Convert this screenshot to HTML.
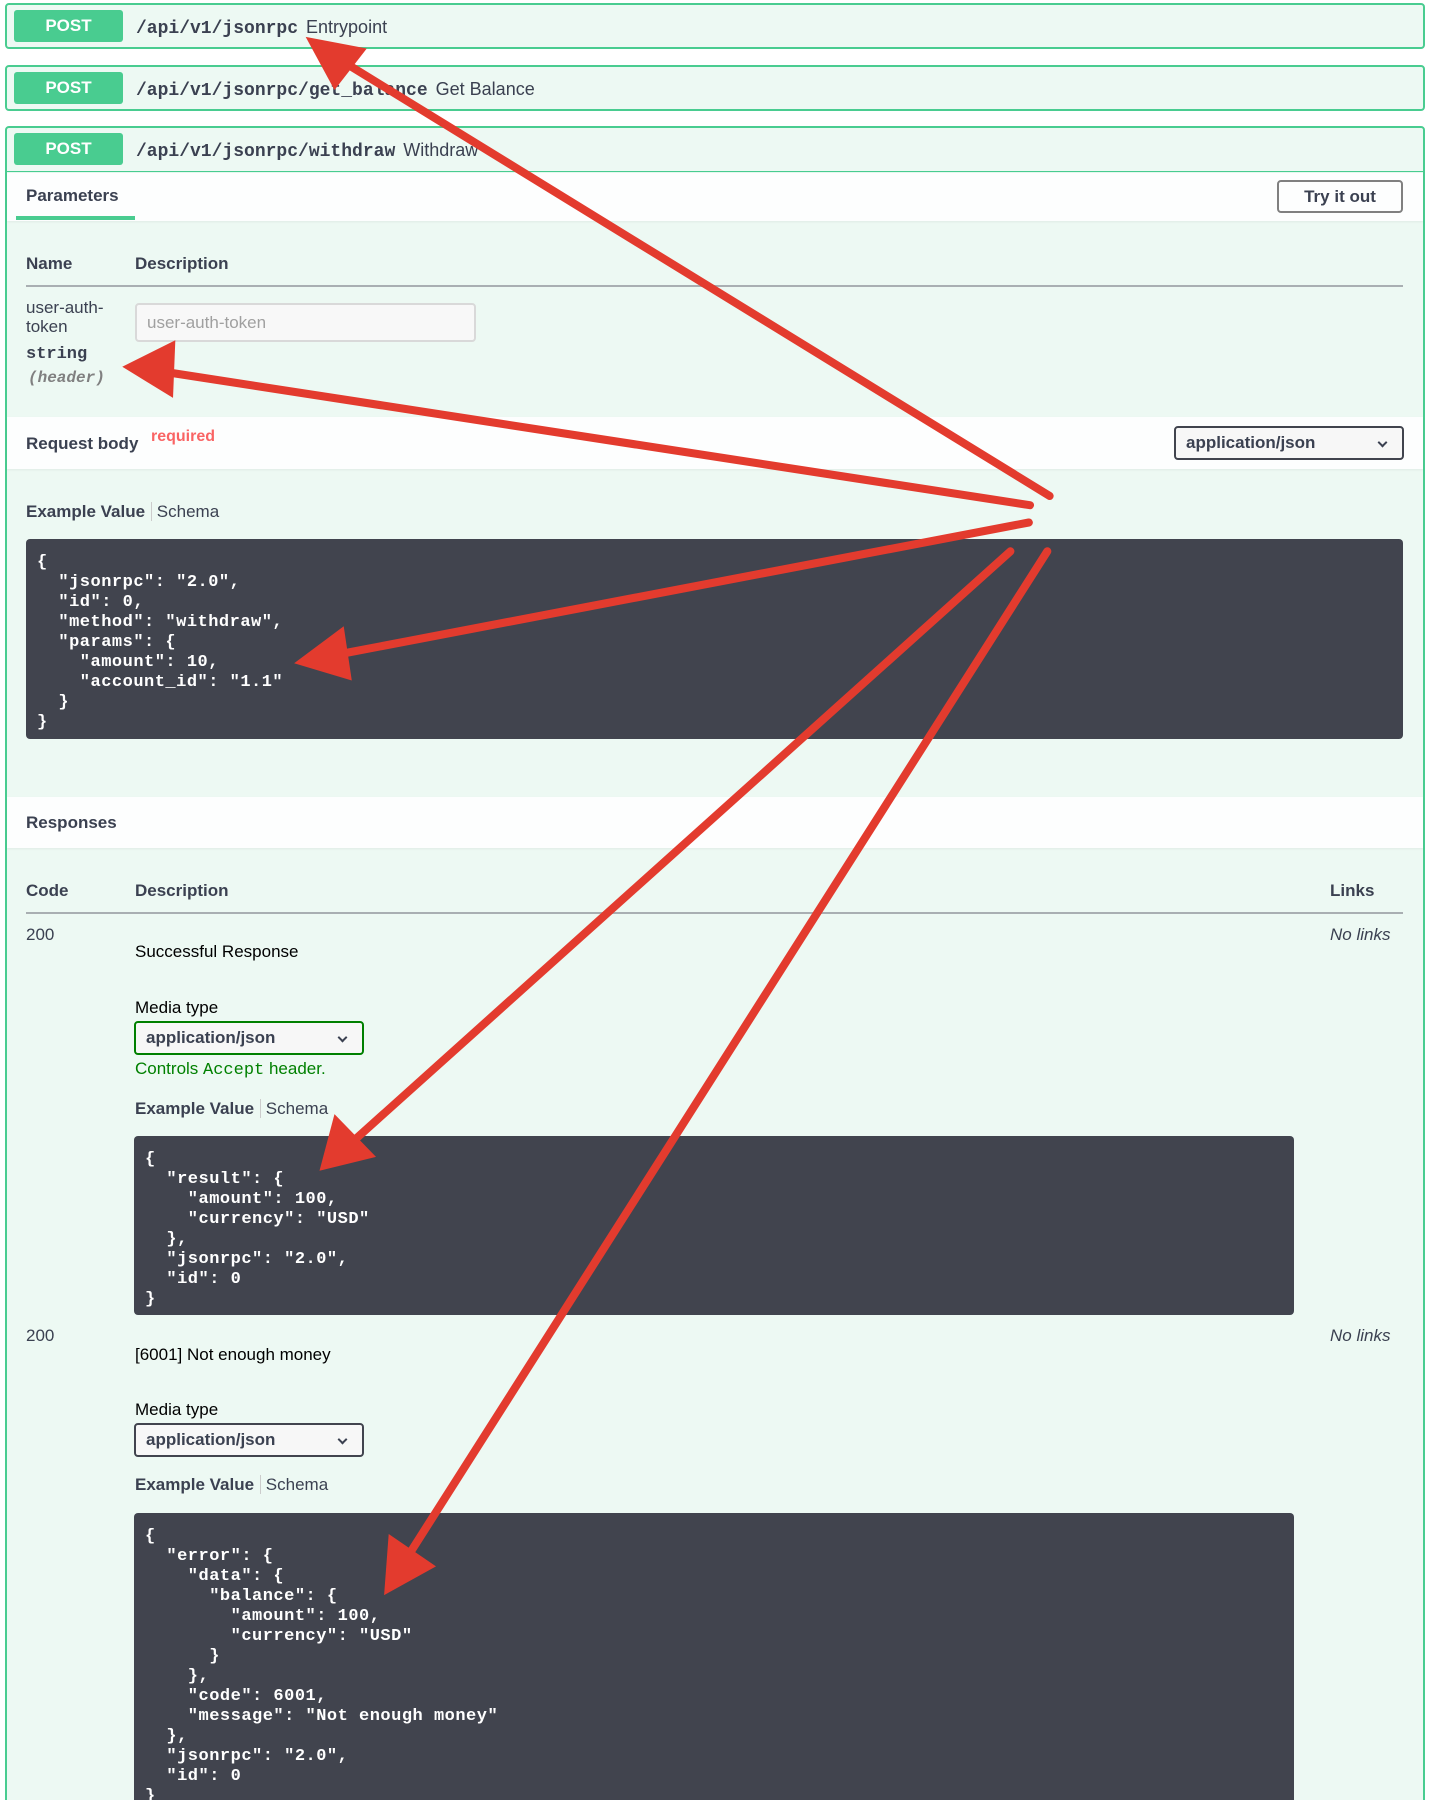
<!DOCTYPE html>
<html><head><meta charset="utf-8"><style>
*{box-sizing:border-box;margin:0;padding:0}
html,body{width:1436px;height:1800px;overflow:hidden;background:#fff}
body{font-family:"Liberation Sans",sans-serif;color:#3b4151;position:relative}
.a{position:absolute;white-space:nowrap}
.row{position:absolute;left:5px;width:1420px;border:2px solid #49cc90;border-radius:4px;background:#edf9f3}
.badge{position:absolute;left:7px;width:109px;height:32px;background:#49cc90;color:#fff;font-weight:bold;font-size:17px;text-align:center;line-height:32px;border-radius:3px}
.path{position:absolute;left:129px;font-family:"Liberation Mono",monospace;font-weight:bold;font-size:18px;color:#3b4151}
.desc{font-size:18px;font-family:"Liberation Sans",sans-serif;font-weight:normal;margin-left:8px}
.band{position:absolute;left:7px;width:1416px;background:rgba(255,255,255,.85);box-shadow:0 1px 2px rgba(0,0,0,.06)}
.h{font-weight:bold;font-size:17px}
.t{font-size:17px}
.code{position:absolute;background:#41444e;border-radius:4px;color:#fff;font-family:"Liberation Mono",monospace;font-weight:bold;font-size:17px;line-height:20px;letter-spacing:.5px;padding:14px 11px;white-space:pre}
.sel{position:absolute;border:2px solid #41444e;border-radius:4px;background:#f7f7f7;font-weight:bold;font-size:17px;padding-left:10px;line-height:30px}
.sel:after{content:"";position:absolute;right:16px;top:11px;width:5px;height:5px;border-right:2px solid #3b4151;border-bottom:2px solid #3b4151;transform:rotate(45deg)}
.ev{font-size:17px}
.ev b{padding-right:6px;border-right:1px solid #ccc}
</style></head><body>
<div class="row" style="top:3px;height:46px"><div class="badge" style="top:5px">POST</div><div class="path" style="top:12px">/api/v1/jsonrpc<span class="desc">Entrypoint</span></div></div>
<div class="row" style="top:65px;height:46px"><div class="badge" style="top:5px">POST</div><div class="path" style="top:12px">/api/v1/jsonrpc/get_balance<span class="desc">Get Balance</span></div></div>
<div class="row" style="top:126px;height:1760px"><div class="badge" style="top:5px">POST</div><div class="path" style="top:12px">/api/v1/jsonrpc/withdraw<span class="desc">Withdraw</span></div>
<div style="position:absolute;left:0;right:0;top:43px;border-top:2px solid #49cc90"></div></div>

<div class="band" style="top:172px;height:49px"></div>
<div class="a h" style="left:26px;top:186px">Parameters</div>
<div class="a" style="left:16px;top:216px;width:119px;height:4px;background:#49cc90"></div>
<div class="a" style="left:1277px;top:180px;width:126px;height:33px;border:2px solid #808080;border-radius:4px;font-weight:bold;font-size:17px;text-align:center;line-height:29px">Try it out</div>

<div class="a h" style="left:26px;top:254px">Name</div>
<div class="a h" style="left:135px;top:254px">Description</div>
<div class="a" style="left:26px;top:285px;width:1377px;height:2px;background:#a9afb2"></div>
<div class="a t" style="left:26px;top:298px;line-height:19px">user-auth-<br>token</div>
<div class="a" style="left:26px;top:345px;font-family:'Liberation Mono',monospace;font-weight:bold;font-size:17px">string</div>
<div class="a" style="left:28px;top:369px;font-family:'Liberation Mono',monospace;font-weight:bold;font-style:italic;font-size:16px;color:#808080">(header)</div>
<div class="a" style="left:135px;top:303px;width:341px;height:39px;border:2px solid #d9d9d9;border-radius:4px;background:#f8f8f8;color:#a0a0a0;font-size:17px;padding:8px 10px">user-auth-token</div>

<div class="band" style="top:417px;height:52px"></div>
<div class="a h" style="left:26px;top:434px">Request body</div>
<div class="a" style="left:151px;top:428px;color:#f93e3e;opacity:.8;font-weight:bold;font-size:16px">required</div>
<div class="sel" style="left:1174px;top:426px;width:230px;height:34px">application/json</div>

<div class="a ev" style="left:26px;top:502px"><b>Example Value</b> Schema</div>
<div class="code" style="left:26px;top:539px;width:1377px;height:200px">{
  "jsonrpc": "2.0",
  "id": 0,
  "method": "withdraw",
  "params": {
    "amount": 10,
    "account_id": "1.1"
  }
}</div>

<div class="band" style="top:797px;height:51px"></div>
<div class="a h" style="left:26px;top:813px">Responses</div>

<div class="a h" style="left:26px;top:881px">Code</div>
<div class="a h" style="left:135px;top:881px">Description</div>
<div class="a h" style="left:1330px;top:881px">Links</div>
<div class="a" style="left:26px;top:912px;width:1377px;height:2px;background:#a9afb2"></div>

<div class="a t" style="left:26px;top:925px">200</div>
<div class="a t" style="left:1330px;top:925px;font-style:italic">No links</div>
<div class="a t" style="left:135px;top:942px;color:#000">Successful Response</div>
<div class="a t" style="left:135px;top:998px;color:#000">Media type</div>
<div class="sel" style="left:134px;top:1021px;width:230px;height:34px;border-color:#008000">application/json</div>
<div class="a t" style="left:135px;top:1059px;color:#008000">Controls <span style="font-family:'Liberation Mono',monospace">Accept</span> header.</div>
<div class="a ev" style="left:135px;top:1099px"><b>Example Value</b> Schema</div>
<div class="code" style="left:134px;top:1136px;width:1160px;height:179px">{
  "result": {
    "amount": 100,
    "currency": "USD"
  },
  "jsonrpc": "2.0",
  "id": 0
}</div>

<div class="a t" style="left:26px;top:1326px">200</div>
<div class="a t" style="left:1330px;top:1326px;font-style:italic">No links</div>
<div class="a t" style="left:135px;top:1345px;color:#000">[6001] Not enough money</div>
<div class="a t" style="left:135px;top:1400px;color:#000">Media type</div>
<div class="sel" style="left:134px;top:1423px;width:230px;height:34px">application/json</div>
<div class="a ev" style="left:135px;top:1475px"><b>Example Value</b> Schema</div>
<div class="code" style="left:134px;top:1513px;width:1160px;height:340px">{
  "error": {
    "data": {
      "balance": {
        "amount": 100,
        "currency": "USD"
      }
    },
    "code": 6001,
    "message": "Not enough money"
  },
  "jsonrpc": "2.0",
  "id": 0
}</div>

<svg class="a" style="left:0;top:0" width="1436" height="1800" viewBox="0 0 1245 1560.6">
<g stroke="#e33b2e" stroke-width="7" stroke-linecap="round" fill="none">
<line x1="910" y1="430" x2="300" y2="55"/>
<line x1="893" y1="438" x2="140" y2="322"/>
<line x1="892" y1="453" x2="290" y2="568"/>
<line x1="876" y1="478" x2="300" y2="995"/>
<line x1="908" y1="478" x2="350" y2="1355"/>
</g>
<g fill="#e33b2e">
<polygon points="265,32 318,42 290,78"/>
<polygon points="106,318 152,295 150,345"/>
<polygon points="255,575 298,543 305,590"/>
<polygon points="277,1015 290,966 326,1003"/>
<polygon points="333,1383 337,1330 378,1358"/>
</g>
</svg>
</body></html>
